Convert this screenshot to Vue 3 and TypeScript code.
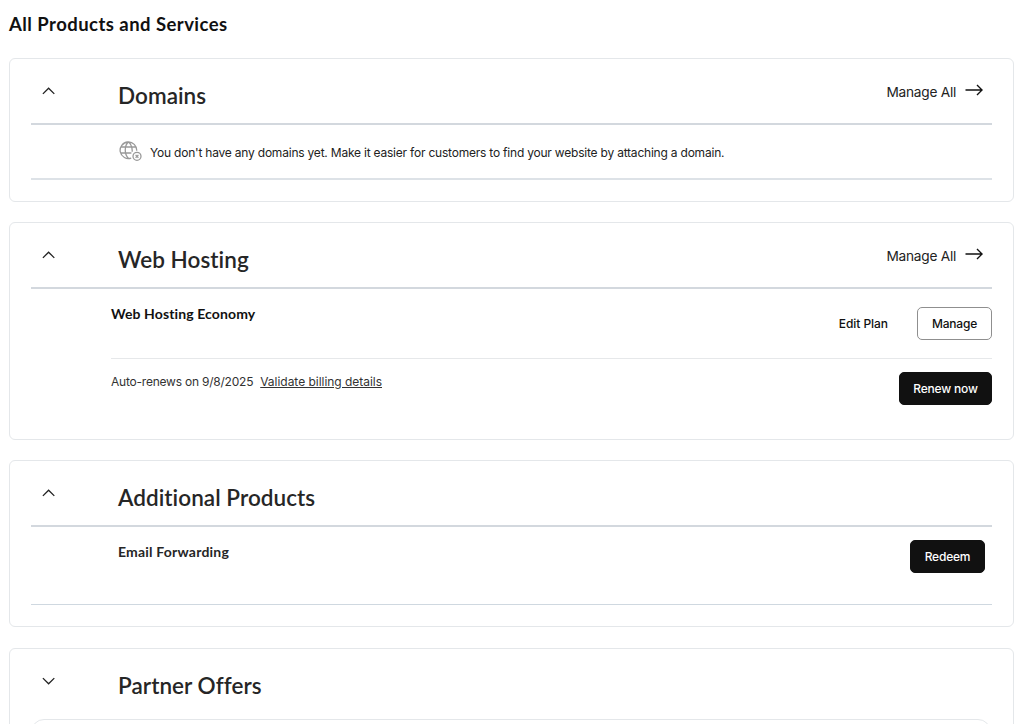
<script setup lang="ts">
import { ref } from 'vue'

interface Section {
  id: string
  title: string
  open: boolean
  manageAll: boolean
}

const sections = ref<Section[]>([
  { id: 'domains', title: 'Domains', open: true, manageAll: true },
  { id: 'hosting', title: 'Web Hosting', open: true, manageAll: true },
  { id: 'additional', title: 'Additional Products', open: true, manageAll: false },
  { id: 'partners', title: 'Partner Offers', open: false, manageAll: false },
])
</script>

<template>
  <main class="page">
    <h1 class="page-title"><span>All Products and Services</span></h1>
    <section v-for="s in sections" :key="s.id" class="card" :class="s.id">
      <header class="card-head">
        <svg class="chevron" viewBox="0 0 14 8" width="14" height="8" aria-hidden="true">
          <path :d="s.open ? 'M.9 6.900 6.600 1.200l5.700 5.700' : 'M.9 1.100 6.600 6.800l5.700-5.700'" />
        </svg>
        <h2 class="card-title"><span>{{ s.title }}</span></h2>
        <a v-if="s.manageAll" class="manage-all">
          <span>Manage All</span>
          <svg class="arrow" viewBox="0 0 18 12" width="18" height="12" aria-hidden="true">
            <path d="M.5 6h16.600M12 .9 17.100 6 12 11.100" />
          </svg>
        </a>
      </header>

      <div v-if="s.id === 'domains'" class="empty-row">
        <svg class="globe" viewBox="0 0 23 20" width="23" height="20" aria-hidden="true">
          <path d="M12.200 17.100A8.300 8.300 0 1 1 17.700 9.800M9.400 .9C5.200 4.500 5.200 13.500 9.400 17.200M9.400 .9c3 2.400 4 5.300 3.800 9.800M1.900 6h15M1.900 12h10.500" />
          <circle cx="18" cy="15.300" r="4" />
          <path d="m16.600 13.900 2.800 2.800m0-2.800-2.800 2.800" />
        </svg>
        <span class="empty-text">You don't have any domains yet. Make it easier for customers to find your website by attaching a domain.</span>
      </div>

      <div v-else-if="s.id === 'hosting'" class="hosting-body">
        <div class="plan-row">
          <h3 class="plan-name"><span>Web Hosting Economy</span></h3>
          <a class="edit-plan">Edit Plan</a>
          <button class="btn outline" type="button">Manage</button>
        </div>
        <div class="renew-row">
          <span class="renew-text">Auto-renews on 9/8/2025</span>
          <a class="validate">Validate billing details</a>
          <button class="btn solid" type="button">Renew now</button>
        </div>
      </div>

      <div v-else-if="s.id === 'additional'" class="product-row">
        <h3 class="product-name"><span>Email Forwarding</span></h3>
        <button class="btn solid" type="button">Redeem</button>
      </div>

      <div v-else class="offer-panel"></div>
    </section>
  </main>
</template>

<style>
html,
body {
  margin: 0;
  background: #fff;
  overflow: hidden;
}
</style>

<style scoped>
.page {
  box-sizing: border-box;
  width: 1024px;
  height: 724px;
  overflow: hidden;
  padding: 0 10px 0 9px;
  font-family: Inter, "Liberation Sans", sans-serif;
  font-variant-ligatures: none;
  color: #111;
}
h1,
h2,
h3 {
  margin: 0;
}
.page-title {
  height: 58px;
  padding-top: 11px;
  box-sizing: border-box;
  font-family: Lato, sans-serif;
  font-size: 18.500px;
  font-weight: 700;
  line-height: 26px;
  letter-spacing: 0.450px;
}
.card {
  box-sizing: border-box;
  border: 1px solid #e4e7ea;
  border-radius: 6px;
  padding: 0 21px;
  margin-bottom: 21px;
}
.domains { height: 144px; margin-bottom: 20px; }
.hosting { height: 218px; margin-bottom: 20px; }
.additional { height: 167px; }
.partners { height: 200px; }
.card-head {
  display: flex;
  align-items: flex-start;
  height: 66px;
  box-sizing: border-box;
  border-bottom: 2px solid #d3d8de;
}
.partners .card-head { border-color: transparent; height: 70px; }
.chevron {
  margin: 28px 0 0 11px;
  fill: none;
  stroke: #222;
  stroke-width: 1.300;
}
.card-title {
  margin: 21px 0 0 62px;
  flex: 1;
  font-family: Lato, sans-serif;
  font-size: 22.500px;
  font-weight: 600;
  line-height: 32px;
  letter-spacing: 0.050px;
  color: #262626;
}
.manage-all {
  display: flex;
  align-items: flex-start;
  padding: 22px 9px 0 0;
  font-size: 13.700px;
  line-height: 22px;
  letter-spacing: -0.260px;
  color: #222;
}
.arrow {
  margin: 3px 0 0 9px;
  fill: none;
  stroke: #111;
  stroke-width: 1.400;
}
.empty-row {
  display: flex;
  align-items: flex-start;
  box-sizing: border-box;
  height: 55px;
  padding-left: 88px;
  border-bottom: 2px solid #dde2e7;
}
.globe {
  margin: 16px 8px 0 0;
  fill: none;
  stroke: #999;
  stroke-width: 1.300;
}
.empty-text {
  margin-top: 18px;
  font-size: 12px;
  line-height: 20px;
  letter-spacing: -0.210px;
  color: #222;
  white-space: nowrap;
}
.hosting-body { padding-left: 80px; }
.plan-row {
  display: flex;
  align-items: flex-start;
  box-sizing: border-box;
  height: 70px;
  padding-top: 18px;
  border-bottom: 1px solid #e6e8ea;
}
.plan-name,
.product-name {
  flex: 1;
  margin-top: -4px;
  font-family: Lato, sans-serif;
  font-size: 14px;
  font-weight: 700;
  line-height: 22px;
  letter-spacing: 0.110px;
  color: #111;
}
.edit-plan {
  margin: 6px 29px 0 0;
  font-size: 12px;
  font-weight: 500;
  line-height: 22px;
  letter-spacing: -0.060px;
}
.btn {
  box-sizing: border-box;
  height: 33px;
  padding: 0;
  border: 1px solid #8f8f8f;
  border-radius: 5px;
  font-family: Inter, sans-serif;
  font-size: 12px;
  font-weight: 500;
  line-height: 32px;
  letter-spacing: -0.200px;
  background: #fff;
  color: #111;
  width: 75px;
}
.solid {
  background: #111;
  border-color: #111;
  color: #fff;
}
.renew-row {
  display: flex;
  align-items: flex-start;
  padding-top: 13px;
  font-size: 12px;
  line-height: 20px;
  color: #333;
}
.renew-text {
  margin-right: 7px;
  letter-spacing: -0.220px;
}
.validate {
  flex: 1;
  letter-spacing: -0.030px;
  text-decoration: underline;
}
.renew-row .btn { width: 93px; }
.product-row {
  display: flex;
  align-items: flex-start;
  box-sizing: border-box;
  height: 78px;
  padding: 13px 7px 0 87px;
  border-bottom: 1px solid #cfd8e0;
}
.product-name {
  margin-top: 1px;
  letter-spacing: 0.200px;
  color: #262626;
}
.offer-panel {
  height: 120px;
  margin-right: 1px;
  border: 1px solid #e4e7ea;
  border-radius: 13px;
}
</style>
